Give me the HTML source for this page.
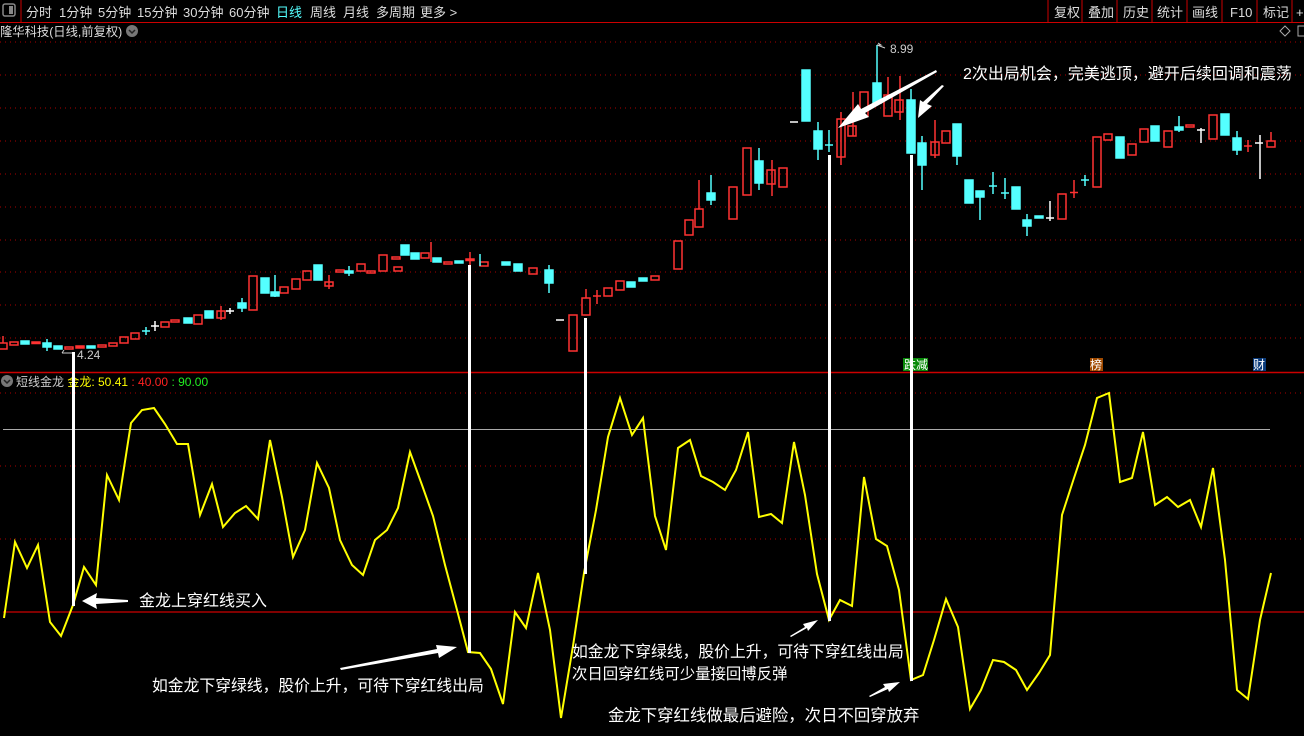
<!DOCTYPE html>
<html><head><meta charset="utf-8">
<style>
body{margin:0;background:#000;width:1304px;height:731px;overflow:hidden;font-family:"Liberation Sans","Noto Sans CJK SC",sans-serif}
svg text{font-family:"Liberation Sans","Noto Sans CJK SC",sans-serif}
</style></head><body>
<svg width="1304" height="731" viewBox="0 0 1304 731" xmlns="http://www.w3.org/2000/svg">
<rect width="1304" height="731" fill="#000"/>
<rect x="3" y="4" width="12" height="12" fill="none" stroke="#888" stroke-width="1.5" rx="2"/><rect x="9" y="6" width="4" height="8" fill="#888"/>
<line x1="21" y1="0" x2="21" y2="22" stroke="#c00"/>
<g fill="#ddd" font-size="13">
<text x="26" y="17">分时</text><text x="59" y="17">1分钟</text><text x="98" y="17">5分钟</text><text x="137" y="17">15分钟</text><text x="183" y="17">30分钟</text><text x="229" y="17">60分钟</text><text x="276" y="17" fill="#54ffff">日线</text><text x="310" y="17">周线</text><text x="343" y="17">月线</text><text x="376" y="17">多周期</text><text x="420" y="17">更多 &gt;</text>
<text x="1054" y="17">复权</text><text x="1088" y="17">叠加</text><text x="1123" y="17">历史</text><text x="1157" y="17">统计</text><text x="1192" y="17">画线</text><text x="1230" y="17">F10</text><text x="1263" y="17">标记</text><text x="1296" y="17">+</text>
</g>
<g stroke="#c00"><line x1="1048" y1="0" x2="1048" y2="22"/><line x1="1082" y1="0" x2="1082" y2="22"/><line x1="1117" y1="0" x2="1117" y2="22"/><line x1="1152" y1="0" x2="1152" y2="22"/><line x1="1187" y1="0" x2="1187" y2="22"/><line x1="1222" y1="0" x2="1222" y2="22"/><line x1="1257" y1="0" x2="1257" y2="22"/><line x1="1292" y1="0" x2="1292" y2="22"/></g>
<line x1="0" y1="22.5" x2="1304" y2="22.5" stroke="#c00"/>
<text x="0" y="36" fill="#ddd" font-size="12.3">隆华科技(日线,前复权)</text>
<circle cx="132" cy="31" r="6" fill="#777"/><path d="M129 30l3 3 3-3" stroke="#222" stroke-width="1.5" fill="none"/>
<path d="M1285 26l5 5-5 5-5-5z" fill="none" stroke="#aaa"/><rect x="1298" y="26" width="8" height="10" fill="none" stroke="#aaa"/>
<g stroke="#a00" stroke-dasharray="1,4" stroke-width="1">
<line x1="0" y1="42" x2="1304" y2="42"/><line x1="0" y1="75" x2="1304" y2="75"/><line x1="0" y1="108" x2="1304" y2="108"/><line x1="0" y1="141" x2="1304" y2="141"/><line x1="0" y1="174" x2="1304" y2="174"/><line x1="0" y1="207" x2="1304" y2="207"/><line x1="0" y1="240" x2="1304" y2="240"/><line x1="0" y1="272" x2="1304" y2="272"/><line x1="0" y1="305" x2="1304" y2="305"/><line x1="0" y1="338" x2="1304" y2="338"/>
<line x1="0" y1="393" x2="1304" y2="393"/><line x1="0" y1="466" x2="1304" y2="466"/><line x1="0" y1="539" x2="1304" y2="539"/>
</g>
<line x1="0" y1="372.5" x2="1304" y2="372.5" stroke="#c00" stroke-width="1.5"/>
<g stroke-width="1.5">
<g stroke="#ff3232" fill="none">
<line x1="3" y1="336" x2="3" y2="343"/><rect x="-1" y="343" width="8" height="6"/>
<rect x="10" y="342" width="8" height="3"/>
<rect x="65" y="347" width="8" height="2"/><rect x="98" y="345" width="8" height="2"/><rect x="109" y="343" width="8" height="3"/><rect x="120" y="337" width="8" height="6"/><rect x="131" y="333" width="8" height="6"/>
<rect x="161" y="322" width="8" height="5"/><rect x="171" y="320" width="8" height="2"/><rect x="194" y="315" width="8" height="9"/><line x1="221" y1="306" x2="221" y2="320"/><rect x="217" y="311" width="8" height="7"/>
<rect x="249" y="276" width="8" height="34"/><rect x="280" y="287" width="8" height="6"/><rect x="292" y="279" width="8" height="10"/><rect x="303" y="271" width="8" height="9"/><line x1="329" y1="275" x2="329" y2="289"/><rect x="325" y="282" width="8" height="4"/><rect x="336" y="270" width="8" height="2"/><rect x="357" y="264" width="8" height="7"/><rect x="367" y="271" width="8" height="2"/><rect x="379" y="255" width="8" height="16"/><rect x="392" y="257" width="8" height="2"/><rect x="421" y="253" width="8" height="5"/><rect x="444" y="262" width="8" height="2"/><line x1="470" y1="252" x2="470" y2="265"/><rect x="466" y="259" width="8" height="1.5"/>
<rect x="394" y="267" width="8" height="4"/><line x1="431" y1="242" x2="431" y2="262"/><rect x="480" y="262" width="8" height="4"/><rect x="529" y="268" width="8" height="6"/>
<rect x="569" y="315" width="8" height="36"/><line x1="586" y1="289" x2="586" y2="298"/><rect x="582" y="298" width="8" height="17"/><line x1="593" y1="296" x2="601" y2="296"/><line x1="597" y1="290" x2="597" y2="304"/><rect x="604" y="288" width="8" height="8"/><rect x="616" y="281" width="8" height="9"/><rect x="651" y="276" width="8" height="4"/><rect x="674" y="241" width="8" height="28"/><rect x="685" y="220" width="8" height="15"/><line x1="699" y1="180" x2="699" y2="209"/><rect x="695" y="209" width="8" height="18"/><rect x="729" y="187" width="8" height="32"/><rect x="743" y="148" width="8" height="47"/><line x1="772" y1="160" x2="772" y2="196"/><rect x="767" y="170" width="8" height="14"/><rect x="779" y="168" width="8" height="19"/>
<line x1="841" y1="112" x2="841" y2="165"/><rect x="837" y="119" width="8" height="38"/><rect x="848" y="126" width="8" height="10"/><line x1="853" y1="92" x2="853" y2="136"/><rect x="860" y="92" width="8" height="24"/><line x1="888" y1="77" x2="888" y2="95"/><rect x="884" y="95" width="8" height="21"/><line x1="900" y1="76" x2="900" y2="120"/><rect x="895" y="100" width="8" height="12"/><line x1="935" y1="120" x2="935" y2="158"/><rect x="931" y="142" width="8" height="13"/><rect x="942" y="131" width="8" height="12"/>
<rect x="1058" y="194" width="8" height="25"/><line x1="1070" y1="192.5" x2="1078" y2="192.5"/><line x1="1074" y1="180" x2="1074" y2="198"/><rect x="1093" y="137" width="8" height="50"/><rect x="1104" y="134" width="8" height="6"/><rect x="1128" y="144" width="8" height="11"/><rect x="1140" y="129" width="8" height="13"/><rect x="1164" y="131" width="8" height="16"/><rect x="1186" y="125" width="8" height="2"/><rect x="1209" y="115" width="8" height="24"/><line x1="1244" y1="146" x2="1252" y2="146"/><line x1="1248" y1="140" x2="1248" y2="152"/><rect x="1267" y="141" width="8" height="6"/><line x1="1271" y1="132" x2="1271" y2="141"/>
</g>
<g fill="#ff3232" stroke="#ff3232"><rect x="32" y="342" width="8" height="1.5"/><rect x="76" y="346" width="8" height="2"/></g>
<g fill="#54ffff" stroke="#54ffff">
<rect x="21" y="341" width="8" height="3"/><line x1="47" y1="339" x2="47" y2="351"/><rect x="43" y="343" width="8" height="4"/><rect x="54" y="346" width="8" height="3"/><rect x="87" y="346" width="8" height="2"/><line x1="142" y1="331" x2="150" y2="331"/><line x1="146" y1="327" x2="146" y2="335"/><rect x="184" y="318" width="8" height="5"/><rect x="205" y="311" width="8" height="7"/><line x1="242" y1="298" x2="242" y2="312"/><rect x="238" y="303" width="8" height="5"/><rect x="261" y="278" width="8" height="15"/><line x1="275" y1="275" x2="275" y2="297"/><rect x="271" y="292" width="8" height="4"/><rect x="314" y="265" width="8" height="15"/><rect x="345" y="271" width="8" height="2"/><line x1="349" y1="266" x2="349" y2="276"/><rect x="401" y="245" width="8" height="10"/><rect x="411" y="253" width="8" height="6"/><rect x="433" y="258" width="8" height="4"/><rect x="455" y="261" width="8" height="2"/><line x1="480" y1="254" x2="480" y2="266"/><rect x="502" y="262" width="8" height="3"/><rect x="514" y="264" width="8" height="7"/><rect x="545" y="270" width="8" height="13"/><line x1="549" y1="265" x2="549" y2="293"/>
<rect x="627" y="282" width="8" height="5"/><rect x="639" y="278" width="8" height="3"/><rect x="707" y="193" width="8" height="7"/><line x1="711" y1="175" x2="711" y2="205"/><rect x="755" y="161" width="8" height="22"/><line x1="759" y1="148" x2="759" y2="190"/>
<rect x="802" y="70" width="8" height="51"/><line x1="818" y1="122" x2="818" y2="160"/><rect x="814" y="131" width="8" height="18"/><line x1="825" y1="145" x2="833" y2="145"/><line x1="829" y1="130" x2="829" y2="152"/><line x1="877" y1="45" x2="877" y2="83"/><rect x="873" y="83" width="8" height="20"/><rect x="907" y="100" width="8" height="53"/><line x1="911" y1="89" x2="911" y2="100"/><rect x="918" y="143" width="8" height="22"/><line x1="922" y1="136" x2="922" y2="190"/><rect x="953" y="124" width="8" height="32"/><line x1="957" y1="156" x2="957" y2="165"/>
<rect x="965" y="180" width="8" height="23"/><rect x="976" y="191" width="8" height="6"/><line x1="980" y1="197" x2="980" y2="220"/><line x1="989" y1="186" x2="997" y2="186"/><line x1="993" y1="172" x2="993" y2="194"/><line x1="1001" y1="193" x2="1009" y2="193"/><line x1="1005" y1="178" x2="1005" y2="199"/><rect x="1012" y="187" width="8" height="22"/><rect x="1023" y="220" width="8" height="6"/><line x1="1027" y1="214" x2="1027" y2="236"/><rect x="1035" y="216" width="8" height="2"/><line x1="1081" y1="180" x2="1089" y2="180"/><line x1="1085" y1="175" x2="1085" y2="186"/><rect x="1116" y="137" width="8" height="21"/><rect x="1151" y="126" width="8" height="15"/><rect x="1175" y="127" width="8" height="3"/><line x1="1179" y1="116" x2="1179" y2="132"/><rect x="1221" y="114" width="8" height="21"/><rect x="1233" y="138" width="8" height="12"/><line x1="1237" y1="131" x2="1237" y2="155"/>
</g>
<g stroke="#fff"><line x1="151" y1="326" x2="159" y2="326"/><line x1="155" y1="321" x2="155" y2="331"/><line x1="226" y1="311" x2="234" y2="311"/><line x1="230" y1="308" x2="230" y2="314"/><line x1="556" y1="320" x2="564" y2="320"/><line x1="790" y1="122" x2="798" y2="122"/><line x1="1046" y1="218" x2="1054" y2="218"/><line x1="1050" y1="201" x2="1050" y2="221"/><line x1="1197" y1="130" x2="1205" y2="130"/><line x1="1201" y1="128" x2="1201" y2="143"/><line x1="1255" y1="143" x2="1263" y2="143"/><line x1="1260" y1="135" x2="1260" y2="179"/></g>
</g>
<text x="890" y="53" fill="#ccc" font-size="12">8.99</text><path d="M877 45h4l-3-2M877 45l8 3" stroke="#ccc" fill="none"/>
<text x="77" y="359" fill="#ccc" font-size="12">4.24</text><path d="M62 353l2-3M62 353h12" stroke="#ccc" fill="none"/>
<rect x="903" y="358" width="25" height="13" fill="#0a8a0a"/><text x="904" y="369" fill="#fff" font-size="12">跌减</text>
<rect x="1090" y="358" width="13" height="13" fill="#a04a00"/><text x="1090" y="369" fill="#fff" font-size="12">榜</text>
<rect x="1253" y="358" width="13" height="13" fill="#0a3a7a"/><text x="1253" y="369" fill="#fff" font-size="12">财</text>
<circle cx="7" cy="381" r="6" fill="#777"/><path d="M4 380l3 3 3-3" stroke="#222" stroke-width="1.5" fill="none"/>
<text x="16" y="386" font-size="12" fill="#ccc">短线金龙 <tspan fill="#ff0">金龙: 50.41</tspan> <tspan fill="#f22">: 40.00</tspan> <tspan fill="#2e2">: 90.00</tspan></text>
<line x1="3" y1="429.5" x2="1270" y2="429.5" stroke="#aaa"/>
<line x1="3" y1="612" x2="1304" y2="612" stroke="#f00"/>
<polyline fill="none" stroke="#ff0" stroke-width="2" points="4,618 15,542 27,568 38,545 50,622 61,636 73,605 84,567 96,585 107,475 119,500 131,423 142,410 154,408 165,424 177,444 188,444 200,515 212,484 223,527 235,513 246,506 258,519 270,440 282,497 293,557 305,530 317,463 329,488 340,540 352,565 363,575 375,540 387,530 398,508 410,452 422,485 433,516 445,565 457,610 468,652 480,653 491,669 503,704 515,612 526,628 538,573 550,630 561,718 573,646 584,573 596,510 608,437 620,398 632,435 643,418 655,516 666,550 678,448 690,440 701,476 713,482 725,490 736,470 748,432 759,517 771,514 782,523 794,442 805,495 817,574 829,620 840,600 852,606 864,477 876,539 887,546 899,590 911,680 923,675 934,640 946,599 958,627 970,709 981,690 993,660 1004,662 1016,670 1027,690 1039,673 1050,655 1062,515 1074,478 1085,445 1097,398 1109,393 1120,482 1132,478 1143,432 1155,505 1167,497 1178,507 1190,500 1201,527 1213,468 1225,560 1237,690 1248,699 1260,620 1271,573"/>
<g fill="#fff">
<rect x="72" y="352" width="3" height="254"/><rect x="468" y="265" width="3" height="388"/><rect x="584" y="318" width="3" height="256"/><rect x="828" y="155" width="3" height="466"/><rect x="910" y="155" width="3" height="526"/>
</g>
<g fill="#fff">
<path d="M82 601L97 593L96 598L128 600L128 602L96 604L97 609Z"/>
<path d="M340 668L437 649L436 645L457 647L439 658L438 653L341 670Z"/>
<path d="M790 636L805 627L803 624L818 620L808 631L807 628L791 637Z"/>
<path d="M869 696L885 687L883 684L900 682L889 692L888 689L870 697Z"/>
<path d="M937 72L865 113L869 117L838 128L858 104L861 109L936 70Z"/>
<path d="M944 86L927 104L932 106L918 118L920 100L923 102L942 85Z"/>
</g>
<g fill="#fff">
<text x="963" y="79" font-size="16">2次出局机会，完美逃顶，避开后续回调和震荡</text>
<text x="139" y="606" font-size="16">金龙上穿红线买入</text>
<text x="152" y="691" font-size="15.8">如金龙下穿绿线，股价上升，可待下穿红线出局</text>
<text x="572" y="657" font-size="15.8">如金龙下穿绿线，股价上升，可待下穿红线出局</text>
<text x="572" y="679" font-size="15.4">次日回穿红线可少量接回博反弹</text>
<text x="608" y="721" font-size="16.4">金龙下穿红线做最后避险，次日不回穿放弃</text>
</g>
</svg>
</body></html>
